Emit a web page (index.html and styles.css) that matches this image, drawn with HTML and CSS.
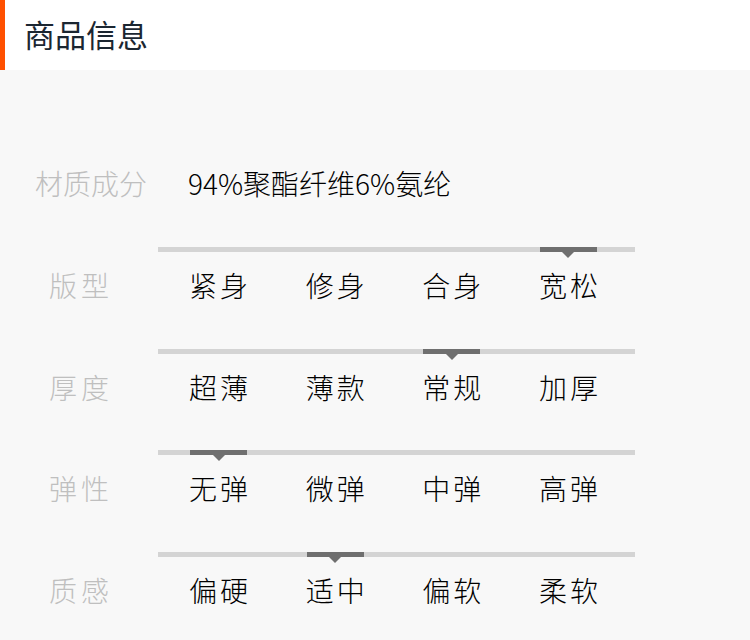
FILE: index.html
```html
<!DOCTYPE html>
<html lang="zh-CN">
<head>
<meta charset="utf-8">
<link rel="stylesheet" href="styles.css">
</head>
<body>
<div class="header"><h1 class="title">商品信息</h1></div>
<div class="panel">
  <div class="material">
    <span class="mat-label">材质成分</span>
    <span class="mat-value">94%聚酯纤维6%氨纶</span>
  </div>
  <div class="attr">
    <div class="track"><div class="ind c4"></div></div>
    <div class="label">版型</div>
    <div class="opts"><span>紧身</span><span>修身</span><span>合身</span><span>宽松</span></div>
  </div>
  <div class="attr">
    <div class="track"><div class="ind c3"></div></div>
    <div class="label">厚度</div>
    <div class="opts"><span>超薄</span><span>薄款</span><span>常规</span><span>加厚</span></div>
  </div>
  <div class="attr">
    <div class="track"><div class="ind c1"></div></div>
    <div class="label">弹性</div>
    <div class="opts"><span>无弹</span><span>微弹</span><span>中弹</span><span>高弹</span></div>
  </div>
  <div class="attr">
    <div class="track"><div class="ind c2"></div></div>
    <div class="label">质感</div>
    <div class="opts"><span>偏硬</span><span>适中</span><span>偏软</span><span>柔软</span></div>
  </div>
</div>
</body>
</html>
```
FILE: styles.css
```css
html, body {
  margin: 0;
  padding: 0;
  background: #f8f8f8;
  font-family: "Noto Sans CJK SC", "Noto Sans", sans-serif;
  font-weight: 300;
}
.header {
  height: 70px;
  background: #ffffff;
  border-left: 5px solid #ff5000;
  box-sizing: border-box;
  display: flex;
  align-items: center;
}
.title {
  margin: -2px 0 0 19px;
  font-size: 31px;
  font-weight: 400;
  color: #1b2631;
  line-height: 40px;
}
.panel {
  padding-top: 93px;
}
.material {
  display: flex;
  height: 40px;
  line-height: 40px;
  font-size: 28px;
  margin-bottom: 44px;
}
.mat-label {
  width: 153px;
  padding-left: 35px;
  color: #bfbfbf;
}
.mat-value {
  color: #000000;
}
.attr {
  display: grid;
  grid-template-columns: 158px 477px;
  grid-template-rows: 5px 40px;
  row-gap: 13px;
  padding-bottom: 43.67px;
}
.track {
  grid-column: 2;
  grid-row: 1;
  background: #d4d4d4;
  display: grid;
  grid-template-columns: repeat(4, 116.67px);
  padding-left: 32px;
}
.ind {
  width: 57px;
  height: 5px;
  background: #6f6f6f;
  position: relative;
}
.ind::after {
  content: "";
  position: absolute;
  left: 50%;
  top: 5px;
  margin-left: -6px;
  border-left: 6px solid transparent;
  border-right: 6px solid transparent;
  border-top: 6px solid #6f6f6f;
}
.c1 { grid-column: 1; }
.c2 { grid-column: 2; }
.c3 { grid-column: 3; }
.c4 { grid-column: 4; }
.label {
  grid-column: 1;
  grid-row: 2;
  padding-left: 49px;
  font-size: 28px;
  line-height: 40px;
  letter-spacing: 4px;
  color: #bfbfbf;
}
.opts {
  grid-column: 2;
  grid-row: 2;
  display: grid;
  grid-template-columns: repeat(4, 116.67px);
  padding-left: 31px;
  font-size: 28px;
  line-height: 40px;
  letter-spacing: 3px;
  color: #000000;
}
```
